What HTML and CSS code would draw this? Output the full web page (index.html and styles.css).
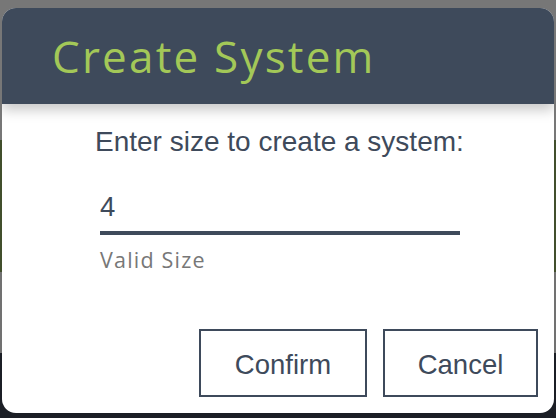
FILE: index.html
```html
<!DOCTYPE html>
<html lang="en">
<head>
  <meta charset="UTF-8">
  <meta name="viewport" content="width=device-width, initial-scale=1.0">
  <title>Create System</title>
  <link rel="stylesheet" href="styles.css">
</head>
<body>
  <!-- 弹框 -->
  <div class="dialog">
    <div class="dialog-header">
      <h1 class="dialog-title">Create System</h1>
    </div>

    <div class="dialog-body">
      <p class="prompt">Enter size to create a system:</p>
      <div class="field">
        <input type="text" class="size-input" value="4">
        <span class="hint">Valid Size</span>
      </div>
    </div>

    <div class="dialog-actions">
      <button class="btn">Confirm</button>
      <button class="btn">Cancel</button>
    </div>
  </div>
</body>
</html>
```

FILE: styles.css
```css
* {
  margin: 0;
  padding: 0;
  box-sizing: border-box;
}

body, html {
  height: 100%;
  width: 100%;
  overflow: hidden;
}

body {
  font-family: 'Liberation Sans', Arial, sans-serif;
  background: linear-gradient(to bottom,
    #777777 0, #777777 140px,
    #414f2c 140px, #414f2c 272px,
    #717171 272px, #717171 353px,
    #1b1e25 353px);
  padding: 8px 2px 0;
}

/* 弹框 */
.dialog {
  width: 552px;
  height: 405px;
  background-color: #fff;
  border-radius: 14px;
  overflow: hidden;
  display: flex;
  flex-direction: column;
}

.dialog-header {
  height: 96px;
  background-color: #3e4a5b;
  padding-left: 50px;
  display: flex;
  align-items: center;
  box-shadow: 0 6px 12px rgba(0, 0, 0, 0.22);
  position: relative;
  z-index: 1;
}

.dialog-title {
  font-family: 'Open Sans', sans-serif;
  font-weight: 400;
  font-size: 44px;
  color: #a3c858;
  letter-spacing: 2.2px;
}

.dialog-body {
  padding: 22px 0 0 93px;
  color: #3e4a5b;
}

.prompt {
  font-size: 28px;
  line-height: 32px;
}

.field {
  margin: 31px 0 0 5px;
  width: 360px;
}

.size-input {
  display: block;
  width: 100%;
  height: 46px;
  border: none;
  border-bottom: 4px solid #3e4a5b;
  font-family: inherit;
  font-size: 27.5px;
  color: #3e4a5b;
  padding-bottom: 6px;
  outline: none;
  background: transparent;
}

.hint {
  display: block;
  margin-top: 10px;
  font-family: 'Open Sans', sans-serif;
  font-size: 21.5px;
  color: #777;
  letter-spacing: 1.2px;
}

/* 按钮 */
.dialog-actions {
  margin-top: auto;
  padding: 0 16px 16px 0;
  display: flex;
  justify-content: flex-end;
  gap: 16px;
}

.btn {
  height: 68px;
  border: 2px solid #3e4a5b;
  background-color: #fff;
  color: #3e4a5b;
  font-family: 'Liberation Sans', Arial, sans-serif;
  font-size: 27.5px;
  padding-top: 3px;
  cursor: pointer;
}

.btn:first-child {
  width: 168px;
}

.btn:last-child {
  width: 155px;
}
```
